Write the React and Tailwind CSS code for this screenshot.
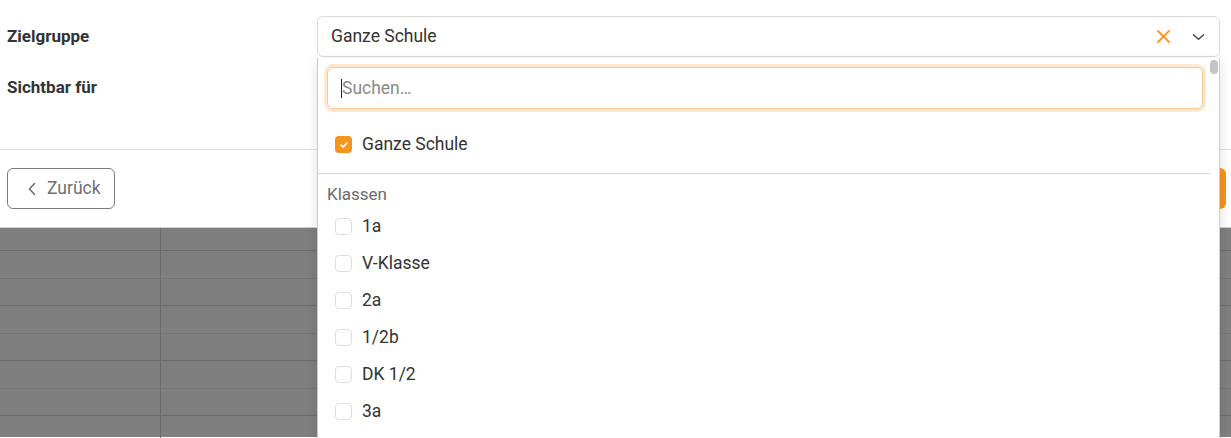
import React from "react";

const classes = ["1a", "V-Klasse", "2a", "1/2b", "DK 1/2", "3a"];

const CheckBox = ({ checked }) =>
  checked ? (
    <span className="flex items-center justify-center w-[17px] h-[17px] rounded-[4px] bg-[#f7941d]">
      <svg width="10" height="10" viewBox="0 0 10 10" fill="none">
        <path d="M2.2 5.2 4.2 7 7.8 3.2" stroke="#fff" strokeWidth="1.8" strokeLinecap="round" strokeLinejoin="round" />
      </svg>
    </span>
  ) : (
    <span className="block w-[17px] h-[17px] rounded-[4px] border border-[#dedede] bg-white" />
  );

const GridRow = ({ height, dotted }) => (
  <div
    className={`flex border-b border-[#6b6b6b] ${dotted ? "border-dotted" : "border-solid"}`}
    style={{ height }}
  >
    <div className="w-[161px] border-r border-[#6b6b6b]" />
    <div className="flex-1" />
  </div>
);

const App = () => {
  return (
    <div className="relative w-[1231px] h-[438px] overflow-hidden bg-white font-['Roboto','Liberation_Sans',sans-serif] text-[#333]">
      {/* form */}
      <div className="pt-4 pl-[7px] pr-[11px]">
        <div className="flex items-center h-[41px]">
          <div className="w-[310px] text-[17px] font-bold">Zielgruppe</div>
          <div className="flex-1 flex items-center h-[41px] border border-[#dadada] rounded-[6px] pl-[13px] pr-[14px]">
            <span className="flex-1 text-[17.5px]">Ganze Schule</span>
            <svg width="15" height="15" viewBox="0 0 16 16" fill="none" className="mr-[21px]">
              <path d="M2 2 14 14M14 2 2 14" stroke="#f7941d" strokeWidth="2" strokeLinecap="round" />
            </svg>
            <svg width="13" height="8" viewBox="0 0 14 8" fill="none">
              <path d="M1.5 1.5 7 6.5 12.5 1.5" stroke="#444" strokeWidth="1.5" strokeLinecap="round" strokeLinejoin="round" />
            </svg>
          </div>
        </div>
        <div className="flex items-center h-[41px] mt-[10px]">
          <div className="w-[310px] text-[17px] font-bold">Sichtbar für</div>
          <div className="flex-1 h-[41px] border border-[#dadada] rounded-[6px]" />
        </div>
      </div>

      <div className="mt-[41px] border-t border-[#dddddd]" />

      {/* footer */}
      <div className="flex justify-between items-center pt-[18px] pb-[18px] pl-[7px] pr-[5px]">
        <button className="flex items-center gap-[10px] h-[41px] w-[108px] pl-[19px] border border-[#777c84] rounded-[6px] text-[17.5px] text-[#6b7079]">
          <svg width="10" height="14" viewBox="0 0 10 14" fill="none">
            <path d="M7.5 1.5 2.5 7 7.5 12.5" stroke="#6b7079" strokeWidth="1.6" strokeLinecap="round" strokeLinejoin="round" />
          </svg>
          Zurück
        </button>
        <button className="h-[41px] w-[130px] rounded-[6px] bg-[#f7941d] text-white text-[16px] font-medium">
          Speichern
        </button>
      </div>

      {/* dimmed calendar */}
      <div className="bg-[#7f7f7f] h-[210px] border-t border-[#cfcfcf]">
        <GridRow height="23px" />
        <GridRow height="27.5px" dotted />
        <GridRow height="27.5px" />
        <GridRow height="27.5px" dotted />
        <GridRow height="27.5px" />
        <GridRow height="27.5px" dotted />
        <GridRow height="27.5px" />
        <GridRow height="27.5px" dotted />
      </div>

      {/* dropdown menu */}
      <div className="absolute left-[317px] top-[58px] w-[903px] h-[400px] flex bg-white border-x border-[#cdcdcd] shadow-[0_4px_12px_rgba(0,0,0,0.12)]">
        <div className="flex-1">
          <div className="pt-[9px] pl-[9px] pr-[7px]">
            <div className="flex items-center h-[42px] rounded-[6px] border border-[#fcc68c] ring-[3px] ring-[#ffe7cf] pl-[13px]">
              <span className="w-px h-[19px] bg-[#222]" />
              <span className="text-[17.5px] text-[#8a8a8a]">Suchen…</span>
            </div>
          </div>
          <div className="flex items-center h-[35px] mt-[18px] pl-[17px] gap-[10px]">
            <CheckBox checked />
            <span className="text-[17.5px]">Ganze Schule</span>
          </div>
          <div className="mt-[11px] border-t border-[#d6d6d6]" />
          <div className="pt-[8px] pl-[9px] h-[34px] flex items-center text-[17px] text-[#6b6b6b]">
            Klassen
          </div>
          {classes.map((c) => (
            <div key={c} className="flex items-center h-[37px] pl-[17px] gap-[10px]">
              <CheckBox />
              <span className="text-[17.5px]">{c}</span>
            </div>
          ))}
        </div>
        <div className="w-[9px] pt-[2px] pr-[1px]">
          <div className="h-[14px] rounded-full bg-[#c4c4c4]" />
        </div>
      </div>
    </div>
  );
};

export default App;
